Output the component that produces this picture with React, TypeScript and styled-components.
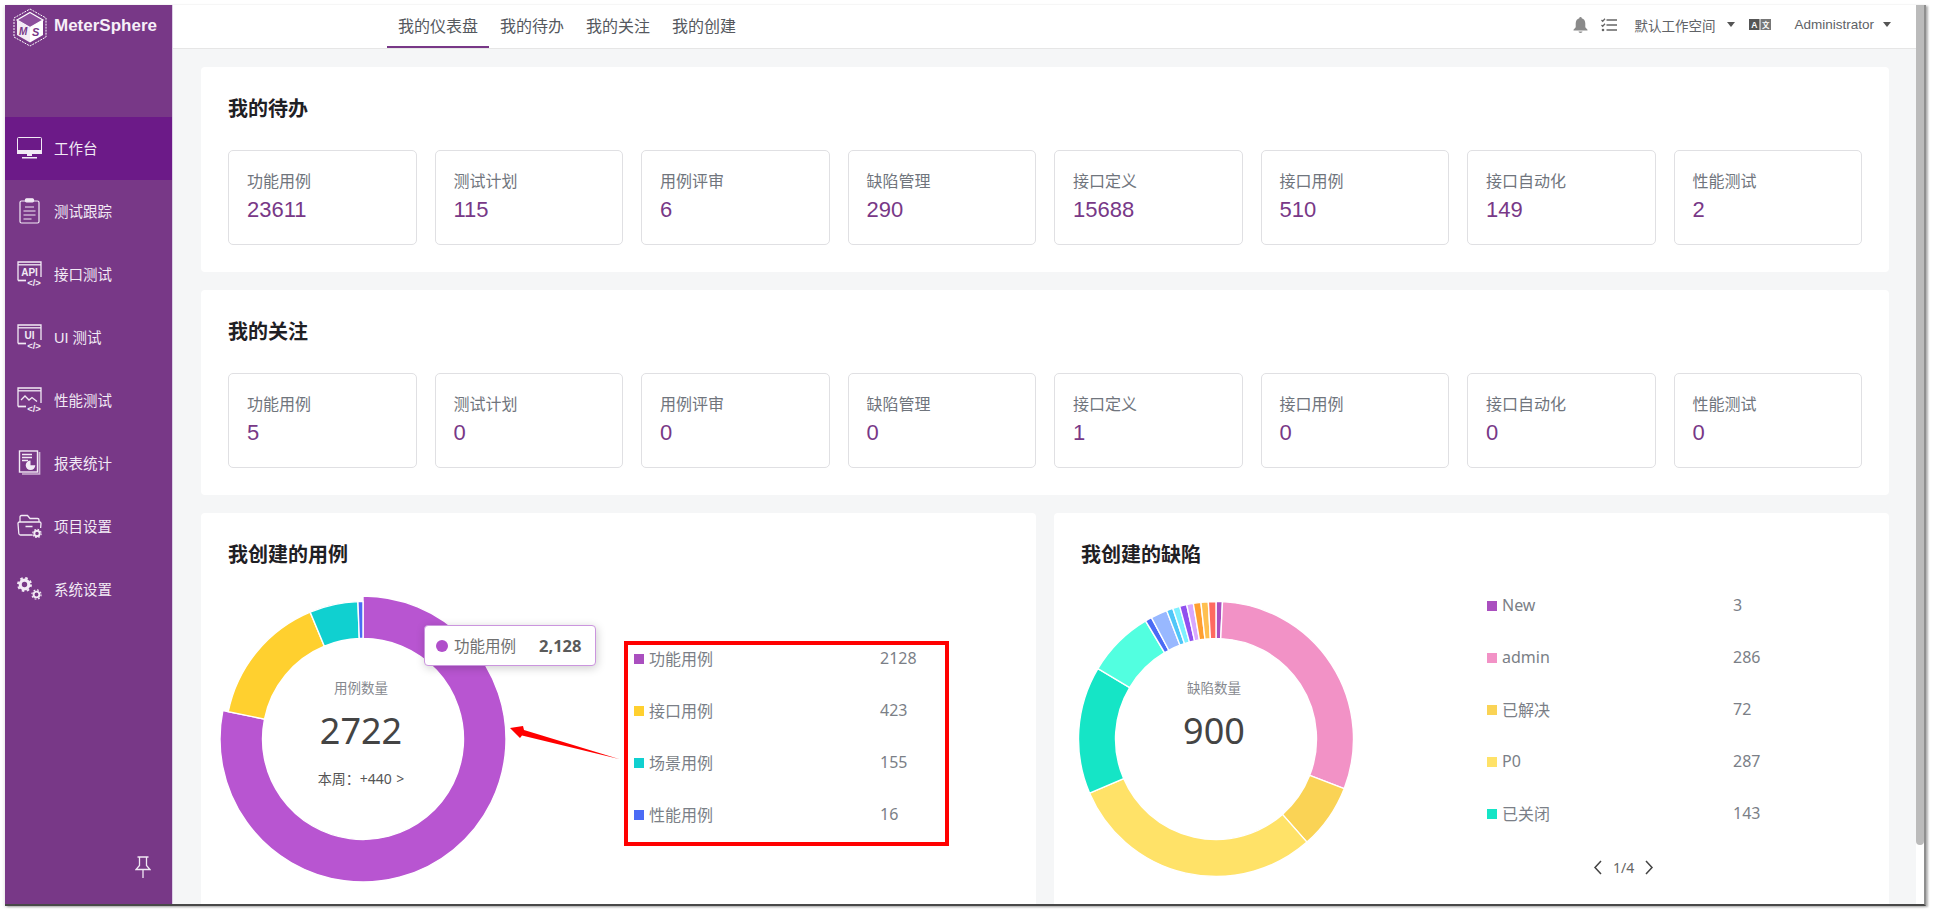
import React from 'react';
import styled, { createGlobalStyle } from 'styled-components';

const CJK = '"Noto Sans CJK SC"';

const GlobalStyle = createGlobalStyle`
  html, body {
    margin: 0;
    height: 100%;
    overflow: hidden;
    background: #fff;
  }
  body {
    font-family: "Liberation Sans", ${CJK}, sans-serif;
  }
  * {
    box-sizing: border-box;
  }
`;

type Stat = { label: string; value: number };
type Slice = { name: string; value: number; color: string; swatch?: string };
type Arc = { start: number; end: number; color: string; outer?: number };

const TODO: Stat[] = [
  { label: '功能用例', value: 23611 },
  { label: '测试计划', value: 115 },
  { label: '用例评审', value: 6 },
  { label: '缺陷管理', value: 290 },
  { label: '接口定义', value: 15688 },
  { label: '接口用例', value: 510 },
  { label: '接口自动化', value: 149 },
  { label: '性能测试', value: 2 },
];

const WATCHED: Stat[] = [
  { label: '功能用例', value: 5 },
  { label: '测试计划', value: 0 },
  { label: '用例评审', value: 0 },
  { label: '缺陷管理', value: 0 },
  { label: '接口定义', value: 1 },
  { label: '接口用例', value: 0 },
  { label: '接口自动化', value: 0 },
  { label: '性能测试', value: 0 },
];

const CASE_SLICES: Slice[] = [
  { name: '功能用例', value: 2128, color: '#b855d1', swatch: '#aa4fbf' },
  { name: '接口用例', value: 423, color: '#ffd02f' },
  { name: '场景用例', value: 155, color: '#10d0d0' },
  { name: '性能用例', value: 16, color: '#4b6bf5' },
];

const BUG_SLICES: Slice[] = [
  { name: 'New', value: 3, color: '#aa4fbf' },
  { name: 'admin', value: 286, color: '#f292c6' },
  { name: '已解决', value: 72, color: '#fad355' },
  { name: 'P0', value: 287, color: '#ffe268' },
  { name: '已关闭', value: 143, color: '#15e5c6' },
];

// measured ends of the bug ring, small slices are wider than their value
const BUG_ARCS: Arc[] = [
  { start: 0, end: 2.7, color: '#aa4fbf' },
  { start: 2.7, end: 111.2, color: '#f292c6' },
  { start: 111.2, end: 138.6, color: '#fad355' },
  { start: 138.6, end: 246.8, color: '#ffe268' },
  { start: 246.8, end: 300.8, color: '#15e5c6' },
  { start: 300.8, end: 329.2, color: '#52ffe0' },
  { start: 329.2, end: 332, color: '#4b6bf5' },
  { start: 332, end: 339, color: '#98b8ff' },
  { start: 339, end: 341.7, color: '#4fc6f8' },
  { start: 341.7, end: 344.7, color: '#7ef0ff' },
  { start: 344.7, end: 347.7, color: '#9050ef' },
  { start: 347.7, end: 350.5, color: '#d8a8ff' },
  { start: 350.5, end: 353.7, color: '#ff9f30' },
  { start: 353.7, end: 356.8, color: '#ffc050' },
  { start: 356.8, end: 360, color: '#ff6a60' },
];

const caseTotal = CASE_SLICES.reduce((sum, s) => sum + s.value, 0);
let caseAngle = 0;
const CASE_ARCS: Arc[] = CASE_SLICES.map((s, i) => {
  const start = caseAngle;
  caseAngle += (s.value / caseTotal) * 360;
  return { start, end: caseAngle, color: s.color, outer: i === 0 ? 143 : 137.5 };
});

const polar = (r: number, deg: number) => {
  const rad = ((deg - 90) * Math.PI) / 180;
  return `${(145 + r * Math.cos(rad)).toFixed(2)} ${(145 + r * Math.sin(rad)).toFixed(2)}`;
};

const arcPath = (start: number, end: number, outer: number, inner: number) => {
  const large = end - start > 180 ? 1 : 0;
  return [
    `M${polar(outer, start)}`,
    `A${outer} ${outer} 0 ${large} 1 ${polar(outer, end)}`,
    `L${polar(inner, end)}`,
    `A${inner} ${inner} 0 ${large} 0 ${polar(inner, start)}`,
    'Z',
  ].join(' ');
};

const Donut: React.FC<{ arcs: Arc[] }> = ({ arcs }) => (
  <svg width="290" height="290" viewBox="0 0 290 290">
    {arcs.map((a) => (
      <path
        key={a.start}
        d={arcPath(a.start, a.end, a.outer ?? 137.5, 100.5)}
        fill={a.color}
        stroke="#fff"
        strokeWidth="1.4"
      />
    ))}
  </svg>
);

const WindowIcon: React.FC<{ children: React.ReactNode }> = ({ children }) => (
  <svg width="25" height="25" viewBox="0 0 25 25" fill="none" stroke="currentColor" strokeWidth="1.3">
    <path d="M1 19.5V1h23v15" />
    <path d="M1 3.8h23" />
    <path d="M1 19.5h8" strokeWidth="1.7" />
    {children}
    <text x="17" y="24.5" fontSize="9.5" fontWeight="700" textAnchor="middle" fill="currentColor" stroke="none">
      {'</>'}
    </text>
  </svg>
);

const windowLabel = (label: string) => (
  <text x="12.5" y="14.5" fontSize="10" fontWeight="700" textAnchor="middle" fill="currentColor" stroke="none">
    {label}
  </text>
);

const MonitorIcon = () => (
  <svg width="25" height="22" viewBox="0 0 25 22" fill="none" stroke="currentColor">
    <rect x="0.5" y="0.5" width="24" height="16" rx="1" />
    <rect x="0.5" y="13.5" width="24" height="3" fill="currentColor" />
    <rect x="10" y="17" width="5" height="2" fill="currentColor" stroke="none" />
    <rect x="5" y="20" width="15" height="1.5" fill="currentColor" stroke="none" />
  </svg>
);

const ClipboardIcon = () => (
  <svg width="25" height="26" viewBox="0 0 25 26" fill="none" stroke="currentColor" strokeWidth="1.2">
    <rect x="3" y="3" width="19" height="22" rx="1.5" />
    <rect x="8.5" y="0.8" width="8" height="3" rx="1" fill="currentColor" />
    <path d="M8 9h9M6.5 13h12M6.5 17h12M6.5 21h8" />
  </svg>
);

const ReportIcon = () => (
  <svg width="25" height="25" viewBox="0 0 25 25" fill="none" stroke="currentColor" strokeWidth="1.4">
    <rect x="2.5" y="1" width="18" height="21" />
    <path d="M22.500 2v22H5" strokeWidth="1.7" opacity="0.7" />
    <path d="M5 4.500h10M5 7.500h10M5 10.500h6" strokeWidth="1.5" />
    <path d="M13.500 10.500a4.800 4.800 0 1 0 4.800 4.800h-4.800z" fill="currentColor" stroke="none" />
  </svg>
);

const FolderIcon = () => (
  <svg width="25" height="24" viewBox="0 0 25 24" fill="none" stroke="currentColor" strokeWidth="1.3">
    <path d="M15.500 21H3.500Q2 21 1.800 19.500L1 9.500Q1 8 2.500 8H22.500Q24 8 24 9.500L23.600 14" />
    <path d="M3 8V3Q3 1.500 4.500 1.500H10.500L13 4.500H20.500Q22 4.500 22 6V8" />
    <path d="M8.500 12.500h7" strokeWidth="1.5" />
    <circle cx="20" cy="19.500" r="2.700" strokeWidth="1.900" />
    <circle cx="20" cy="19.500" r="4.200" strokeWidth="1.100" strokeDasharray="1.650 1.650" />
  </svg>
);

const GearsIcon = () => (
  <svg width="25" height="24" viewBox="0 0 25 24" fill="none" stroke="currentColor">
    <circle cx="7.500" cy="7.500" r="4.300" strokeWidth="3.200" />
    <circle cx="7.500" cy="7.500" r="6.500" strokeWidth="1.900" strokeDasharray="2.550 2.550" />
    <circle cx="19.500" cy="17.500" r="2.900" strokeWidth="1.900" />
    <circle cx="19.500" cy="17.500" r="4.600" strokeWidth="1.200" strokeDasharray="1.800 1.810" />
  </svg>
);

const NAV_ITEMS = [
  { label: '工作台', icon: <MonitorIcon />, active: true },
  { label: '测试跟踪', icon: <ClipboardIcon /> },
  { label: '接口测试', icon: <WindowIcon>{windowLabel('API')}</WindowIcon> },
  { label: 'UI 测试', icon: <WindowIcon>{windowLabel('UI')}</WindowIcon> },
  {
    label: '性能测试',
    icon: (
      <WindowIcon>
        <path d="M4 13l4-4 4 4 3-2.500 5 4" />
      </WindowIcon>
    ),
  },
  { label: '报表统计', icon: <ReportIcon /> },
  { label: '项目设置', icon: <FolderIcon /> },
  { label: '系统设置', icon: <GearsIcon /> },
];

const Logo = () => (
  <svg width="34" height="39" viewBox="0 0 34 39">
    <path d="M17 1L33 10v19L17 38 1 29V10z" fill="none" stroke="#fff" strokeWidth="1" strokeDasharray="2 1" />
    <path d="M17 4.500L30 12 17 19.500 4 12z" fill="#8d4f9c" stroke="#fff" strokeWidth="1.200" />
    <path d="M4 12l13 7.500v15L4 27z" fill="#f4ecf6" />
    <path d="M30 12l-13 7.500v15L30 27z" fill="#fff" />
    <text x="6" y="27" fontSize="10" fontWeight="700" fontStyle="italic" fill="#783887">M</text>
    <text x="19" y="28" fontSize="11" fontWeight="700" fontStyle="italic" fill="#783887">S</text>
  </svg>
);

const PinIcon = () => (
  <svg width="16" height="22" viewBox="0 0 16 22" fill="none" stroke="#f0e8f4" strokeWidth="1.300">
    <path d="M2.500 1h11M4.500 1v8.500L1 13.500h14l-3.500-4V1M8 13.500V22" />
  </svg>
);

const BellIcon = () => (
  <svg width="15" height="16" viewBox="0 0 15 16" fill="#8a8a8a">
    <path d="M7.500 0a1.200 1.200 0 0 1 1.200 1.300C11 1.900 12.300 3.900 12.300 6.500v3.700L14.500 12.800V13.500H.5v-.7L2.700 10.200V6.500C2.700 3.900 4 1.900 6.300 1.300A1.200 1.200 0 0 1 7.500 0z" />
    <path d="M5.500 14.500h4a2 1.400 0 0 1-4 0z" />
  </svg>
);

const TaskIcon = () => (
  <svg width="16" height="14" viewBox="0 0 16 14" fill="none" stroke="#666">
    <path d="M5.500 2h10.500M5.500 7h10.500M5.500 12h10.500" strokeWidth="1.500" />
    <path d="M.5 2l1.200 1.200L4 .8M.5 7l1.200 1.200L4 5.800" strokeWidth="1.300" />
    <circle cx="2" cy="12" r="1.300" fill="#666" stroke="none" />
  </svg>
);

const TranslateIcon = () => (
  <svg width="22" height="11" viewBox="0 0 22 11">
    <rect width="10.500" height="11" fill="#555" />
    <rect x="11.500" width="10.500" height="11" fill="#777" />
    <text x="5.200" y="9" fontSize="8.500" fontWeight="700" textAnchor="middle" fill="#fff">A</text>
    <text x="16.700" y="8.800" fontSize="7.500" fontWeight="700" textAnchor="middle" fill="#fff">文</text>
  </svg>
);

const Chevron: React.FC<{ d: string }> = ({ d }) => (
  <svg width="10" height="15" viewBox="0 0 10 15" fill="none" stroke="#444" strokeWidth="1.500">
    <path d={d} />
  </svg>
);

const StatGrid: React.FC<{ title: string; items: Stat[] }> = ({ title, items }) => (
  <Card>
    <CardTitle>{title}</CardTitle>
    <TileGrid>
      {items.map((item) => (
        <Tile key={item.label}>
          <TileLabel>{item.label}</TileLabel>
          <TileValue>{item.value}</TileValue>
        </Tile>
      ))}
    </TileGrid>
  </Card>
);

const App: React.FC = () => (
  <>
    <GlobalStyle />
    <Frame>
      <Sidebar>
        <Brand>
          <Logo />
          <BrandName>MeterSphere</BrandName>
        </Brand>
        {NAV_ITEMS.map((item) => (
          <NavItem key={item.label} $active={item.active}>
            <NavIcon>{item.icon}</NavIcon>
            {item.label}
          </NavItem>
        ))}
        <PinSlot>
          <PinIcon />
        </PinSlot>
      </Sidebar>

      <Main>
        <Header>
          <Tabs>
            <Tab $active>我的仪表盘</Tab>
            <Tab>我的待办</Tab>
            <Tab>我的关注</Tab>
            <Tab>我的创建</Tab>
          </Tabs>
          <HeaderTools>
            <BellIcon />
            <TaskSlot>
              <TaskIcon />
            </TaskSlot>
            <ToolText>默认工作空间</ToolText>
            <Caret $gap={12} />
            <TranslateSlot>
              <TranslateIcon />
            </TranslateSlot>
            <ToolText>Administrator</ToolText>
            <Caret $gap={9} />
          </HeaderTools>
        </Header>

        <Content>
          <StatGrid title="我的待办" items={TODO} />
          <StatGrid title="我的关注" items={WATCHED} />

          <ChartCards>
            <ChartCard>
              <CardTitle>我创建的用例</CardTitle>
              <ChartRow>
                <ChartBox>
                  <Donut arcs={CASE_ARCS} />
                  <CenterText>
                    <CenterLabel>用例数量</CenterLabel>
                    <CenterValue>2722</CenterValue>
                    <CenterNote>本周：+440 &gt;</CenterNote>
                  </CenterText>
                  <Tooltip>
                    <TooltipDot />
                    <TooltipName>功能用例</TooltipName>
                    <TooltipValue>2,128</TooltipValue>
                  </Tooltip>
                </ChartBox>
                <MarkedLegend>
                  {CASE_SLICES.map((s) => (
                    <LegendRow key={s.name}>
                      <LegendName>
                        <Swatch $color={s.swatch ?? s.color} />
                        {s.name}
                      </LegendName>
                      <span>{s.value}</span>
                    </LegendRow>
                  ))}
                </MarkedLegend>
              </ChartRow>
              <Arrow width="120" height="46" viewBox="0 0 120 46">
                <path d="M5 8L18 6 19 10 114 39 17 15.500 15 18z" fill="#f00" />
              </Arrow>
            </ChartCard>

            <ChartCard>
              <CardTitle>我创建的缺陷</CardTitle>
              <ChartRow>
                <ChartBox>
                  <Donut arcs={BUG_ARCS} />
                  <CenterText>
                    <CenterLabel>缺陷数量</CenterLabel>
                    <CenterValue>900</CenterValue>
                  </CenterText>
                </ChartBox>
                <PlainLegend>
                  {BUG_SLICES.map((s) => (
                    <LegendRow key={s.name}>
                      <LegendName>
                        <Swatch $color={s.color} />
                        {s.name}
                      </LegendName>
                      <span>{s.value}</span>
                    </LegendRow>
                  ))}
                  <Pager>
                    <Chevron d="M8 1L2 7.500 8 14" />
                    <PagerText>1/4</PagerText>
                    <Chevron d="M2 1l6 6.500L2 14" />
                  </Pager>
                </PlainLegend>
              </ChartRow>
            </ChartCard>
          </ChartCards>
        </Content>
      </Main>

      <ScrollTrack>
        <ScrollThumb />
      </ScrollTrack>
    </Frame>
  </>
);

const Frame = styled.div`
  display: flex;
  position: relative;
  width: 1921px;
  height: 901px;
  margin: 5px 0 0 5px;
  background: #fff;
  border-right: 2px solid #8f8f8f;
  border-bottom: 2px solid #484848;
  box-shadow: 2px 1px 2px rgba(0, 0, 0, 0.3), -1px 1px 3px rgba(0, 0, 0, 0.1);
`;

const Sidebar = styled.aside`
  display: flex;
  flex-direction: column;
  flex: 0 0 168px;
  background: #783887;
  color: #f2eaf5;
  border-right: 1px solid #dccfe6;
`;

const Brand = styled.div`
  display: flex;
  align-items: flex-start;
  gap: 7px;
  height: 112px;
  padding: 3px 0 0 8px;
`;

const BrandName = styled.span`
  margin-top: 8px;
  font-size: 17px;
  font-weight: 700;
  line-height: 20px;
  color: #f6eff8;
`;

const NavItem = styled.div<{ $active?: boolean }>`
  display: flex;
  align-items: center;
  gap: 12px;
  height: 63px;
  padding: 0 0 2px 12px;
  font-size: 14.5px;
  background: ${(p) => (p.$active ? '#6c1a88' : 'transparent')};
`;

const NavIcon = styled.span`
  display: flex;
  justify-content: center;
  width: 25px;
`;

const PinSlot = styled.div`
  display: flex;
  justify-content: flex-end;
  margin-top: auto;
  padding: 0 21px 26px 0;
`;

const Main = styled.main`
  display: flex;
  flex-direction: column;
  flex: 1;
  min-width: 0;
  background: #f5f6f7;
  overflow: hidden;
`;

const Header = styled.header`
  display: flex;
  align-items: stretch;
  justify-content: space-between;
  flex: 0 0 44px;
  padding: 0 25px 0 214px;
  background: #fff;
  border-bottom: 1px solid #e6e6e6;
`;

const Tabs = styled.nav`
  display: flex;
`;

const Tab = styled.div<{ $active?: boolean }>`
  display: flex;
  align-items: center;
  padding: 0 11px 1px;
  font-size: 16px;
  color: #55585e;
  border-bottom: 2px solid ${(p) => (p.$active ? '#783887' : 'transparent')};
`;

const HeaderTools = styled.div`
  display: flex;
  align-items: center;
  padding-bottom: 4px;
  color: #666;
`;

const TaskSlot = styled.span`
  display: flex;
  margin: 0 17px 0 13px;
`;

const ToolText = styled.span`
  font-size: 13.5px;
  color: #606266;
`;

const TranslateSlot = styled.span`
  display: flex;
  margin: 0 23px 0 14px;
`;

const Caret = styled.span<{ $gap: number }>`
  margin-left: ${(p) => p.$gap}px;
  border-left: 4px solid transparent;
  border-right: 4px solid transparent;
  border-top: 5px solid #555;
`;

const Content = styled.div`
  display: flex;
  flex-direction: column;
  gap: 18px;
  padding: 18px 27px 0 28px;
`;

const Card = styled.section`
  position: relative;
  height: 205px;
  padding: 27px 27px 0;
  background: #fff;
  border-radius: 4px;
`;

const CardTitle = styled.h2`
  margin: 0;
  height: 30px;
  font-family: "Noto Sans", ${CJK}, sans-serif;
  font-size: 20px;
  font-weight: 700;
  line-height: 30px;
  color: #1f2024;
`;

const TileGrid = styled.div`
  display: grid;
  grid-template-columns: repeat(8, 1fr);
  gap: 18px;
  margin-top: 26px;
`;

const Tile = styled.div`
  height: 95px;
  padding: 19px 18px 0;
  border: 1px solid #e0e0e3;
  border-radius: 5px;
`;

const TileLabel = styled.div`
  font-size: 16px;
  line-height: 24px;
  color: #70757d;
`;

const TileValue = styled.div`
  margin-top: 3px;
  font-size: 22px;
  line-height: 26px;
  color: #783887;
`;

const ChartCards = styled.div`
  display: grid;
  grid-template-columns: 1fr 1fr;
  gap: 18px;
`;

const ChartCard = styled(Card)`
  height: 400px;
  padding: 27px 17px 0;

  ${CardTitle} {
    padding-left: 10px;
  }
`;

const ChartRow = styled.div`
  display: flex;
  align-items: flex-start;
  margin-top: 24px;
`;

const ChartBox = styled.div`
  position: relative;
  flex: 0 0 290px;
  height: 290px;
`;

const CenterText = styled.div`
  position: absolute;
  top: 82px;
  left: 0;
  display: flex;
  flex-direction: column;
  align-items: center;
  width: 286px;
  font-family: "Noto Sans", ${CJK}, sans-serif;
`;

const CenterLabel = styled.div`
  font-size: 13.5px;
  line-height: 24px;
  color: #85888e;
`;

const CenterValue = styled.div`
  margin-top: 6px;
  font-size: 36px;
  line-height: 50px;
  color: #444;
`;

const CenterNote = styled.div`
  margin-top: 12px;
  font-size: 14px;
  line-height: 22px;
  word-spacing: 1px;
  color: #555;
`;

const Tooltip = styled.div`
  position: absolute;
  top: 31px;
  left: 206px;
  display: flex;
  align-items: center;
  width: 172px;
  height: 41px;
  padding-left: 11px;
  font-family: "Noto Sans", ${CJK}, sans-serif;
  background: #fff;
  border: 1.5px solid #cb95de;
  border-radius: 4px;
  box-shadow: 1px 2px 10px rgba(0, 0, 0, 0.2);
`;

const TooltipDot = styled.span`
  width: 12px;
  height: 12px;
  border-radius: 50%;
  background: #b04fca;
`;

const TooltipName = styled.span`
  margin-left: 6px;
  font-size: 15.5px;
  color: #707070;
`;

const TooltipValue = styled.span`
  margin-left: 23px;
  font-size: 16.5px;
  font-weight: 700;
  color: #5a5a5a;
`;

const Legend = styled.div`
  display: flex;
  flex-direction: column;
  gap: 28px;
  width: 325px;
  font-family: "Noto Sans", ${CJK}, sans-serif;
`;

const MarkedLegend = styled(Legend)`
  height: 205px;
  margin: 47px 0 0 116px;
  padding: 1px 0 0 6px;
  border: 4px solid #f00;
`;

const PlainLegend = styled(Legend)`
  margin: -1px 0 0 126px;
`;

const LegendRow = styled.div`
  display: grid;
  grid-template-columns: 246px 1fr;
  align-items: center;
  height: 24px;
  font-size: 16px;
  color: #7b7f87;
`;

const LegendName = styled.div`
  display: flex;
  align-items: center;
  gap: 5px;
`;

const Swatch = styled.i<{ $color: string }>`
  width: 10px;
  height: 10px;
  margin-top: 2px;
  background: ${(p) => p.$color};
`;

const Pager = styled.div`
  display: flex;
  align-items: center;
  gap: 10px;
  margin: 5px 0 0 106px;
`;

const PagerText = styled.span`
  font-size: 14px;
  color: #666;
`;

const Arrow = styled.svg`
  position: absolute;
  top: 207px;
  left: 304px;
`;

const ScrollTrack = styled.div`
  flex: 0 0 8px;
  background: #fff;
`;

const ScrollThumb = styled.div`
  height: 840px;
  background: #bbb;
  border-radius: 0 0 4px 4px;
`;

export default App;
